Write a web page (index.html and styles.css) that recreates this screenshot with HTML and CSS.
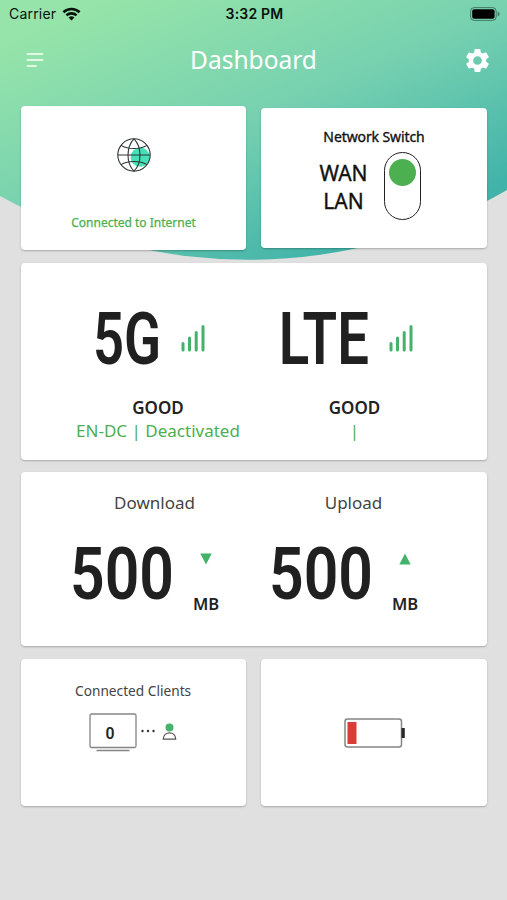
FILE: index.html
```html
<!DOCTYPE html>
<html lang="en">
<head>
  <meta charset="UTF-8">
  <title>Dashboard</title>
  <meta name="viewport" content="width=device-width, initial-scale=1.0">
  <link rel="stylesheet" href="styles.css">
</head>
<body>

<svg class="backdrop" width="507" height="262" viewBox="0 0 507 262">
  <defs>
    <linearGradient id="sky" gradientUnits="userSpaceOnUse" x1="16" y1="37" x2="144" y2="340">
      <stop offset="0" stop-color="#96e4a9"/>
      <stop offset="0.5" stop-color="#77d1b0"/>
      <stop offset="1" stop-color="#40b2a9"/>
    </linearGradient>
  </defs>
  <path d="M0 0H507V190A515 515 0 0 1 0 196Z" fill="url(#sky)"/>
</svg>

<div class="status">
  <div class="carrier">
    <span>Carrier</span>
    <svg width="19" height="14" viewBox="0 0 19 14">
      <g fill="none" stroke="#071209" stroke-width="2.6">
        <path d="M1.4 5.3A11.6 11.6 0 0 1 17.6 5.3"/>
        <path d="M4.4 8.4A7.4 7.4 0 0 1 14.6 8.4"/>
      </g>
      <path d="M6.5 10.6A4.3 4.3 0 0 1 12.5 10.6L9.5 13.6Z" fill="#071209"/>
    </svg>
  </div>
  <span class="time">3:32 PM</span>
  <svg class="phone-battery" width="30" height="14" viewBox="0 0 30 14">
    <rect x="0.6" y="0.6" width="25.6" height="12.8" rx="3.6" fill="none" stroke="#071209" stroke-opacity=".45"/>
    <rect x="2.2" y="2.2" width="22.4" height="9.6" rx="2" fill="#000"/>
    <path d="M27.6 4.6Q29.6 5.4 29.6 7T27.6 9.4Z" fill="#071209" fill-opacity=".45"/>
  </svg>
</div>

<div class="topbar">
  <svg width="18" height="16" viewBox="0 0 18 16">
    <path d="M1.500 2H16.500M1.500 8H16.500M1.500 14H10" fill="none" stroke="#e3f8e2" stroke-width="1.9" stroke-linecap="round"/>
  </svg>
  <h1>Dashboard</h1>
  <svg width="29" height="29" viewBox="0 0 24 24">
    <path fill="#fff" d="M19.14 12.94c.04-.3.06-.61.06-.94s-.02-.64-.07-.94l2.03-1.58c.18-.14.23-.41.12-.61l-1.92-3.32c-.12-.22-.37-.29-.59-.22l-2.39.96c-.5-.38-1.03-.7-1.62-.94l-.36-2.54c-.04-.24-.24-.41-.48-.41h-3.84c-.24 0-.43.17-.47.41l-.36 2.54c-.59.24-1.13.57-1.62.94l-2.39-.96c-.22-.08-.47 0-.59.22L2.74 8.87c-.12.21-.08.47.12.61l2.03 1.58c-.05.3-.09.63-.09.94s.02.64.07.94l-2.03 1.58c-.18.14-.23.41-.12.61l1.92 3.32c.12.22.37.29.59.22l2.39-.96c.5.38 1.03.7 1.62.94l.36 2.54c.05.24.24.41.48.41h3.84c.24 0 .44-.17.47-.41l.36-2.54c.59-.24 1.13-.56 1.62-.94l2.39.96c.22.08.47 0 .59-.22l1.92-3.32c.12-.22.07-.47-.12-.61l-2.01-1.58zM12 15.6c-1.98 0-3.6-1.62-3.6-3.6s1.62-3.6 3.6-3.6 3.6 1.62 3.6 3.6-1.62 3.6-3.6 3.6z"/>
  </svg>
</div>

<main class="cards">
  <div class="row">
    <section class="card internet">
      <svg width="34" height="34" viewBox="0 0 34 34">
        <circle cx="23.2" cy="19.2" r="9.6" fill="#45e2b7"/>
        <g fill="none" stroke="#303536" stroke-width="1.1">
          <circle cx="17" cy="17" r="16.2"/>
          <path d="M.8 17H33.2"/>
          <path d="M17 .8C9 9 9 25 17 33.2C25 25 25 9 17 .8"/>
          <path d="M4 7.400C11 11.600 23 11.600 30 7.400M4 26.600C11 22.400 23 22.400 30 26.600"/>
        </g>
      </svg>
      <p>Connected to Internet</p>
    </section>

    <section class="card network">
      <h2>Network Switch</h2>
      <div class="switch-row">
        <div class="switch-labels">
          <span>WAN</span>
          <span>LAN</span>
        </div>
        <div class="switch"><div class="knob"></div></div>
      </div>
    </section>
  </div>

  <section class="card signal">
    <div class="signal-col nr">
      <div class="signal-head">
        <svg class="big" width="68" height="58" viewBox="0 0 68 58">
          <text transform="scale(.74 1)" x="0" y="55" textLength="92" lengthAdjust="spacingAndGlyphs">5G</text>
        </svg>
        <svg class="bars" width="24" height="27" viewBox="0 0 24 27">
          <path d="M2 18.500V25M8.500 13V25M15.200 7.500V25M22 1.500V25"/>
        </svg>
      </div>
      <strong>GOOD</strong>
      <p>EN-DC | Deactivated</p>
    </div>
    <div class="signal-col lte">
      <div class="signal-head">
        <svg class="big" width="91" height="58" viewBox="0 0 91 58">
          <text transform="scale(.74 1)" x="1" y="55" textLength="122" lengthAdjust="spacingAndGlyphs">LTE</text>
        </svg>
        <svg class="bars" width="24" height="27" viewBox="0 0 24 27">
          <path d="M2 18.500V25M8.500 13V25M15.200 7.500V25M22 1.500V25"/>
        </svg>
      </div>
      <strong>GOOD</strong>
      <p>|</p>
    </div>
  </section>

  <section class="card traffic">
    <div class="traffic-col">
      <h2>Download</h2>
      <div class="traffic-value">
        <svg class="big" width="104" height="58" viewBox="0 0 104 58">
          <text transform="scale(.8 1)" x="0" y="55" textLength="130" lengthAdjust="spacingAndGlyphs">500</text>
        </svg>
        <div class="unit">
          <svg width="12" height="12" viewBox="0 0 12 12"><path d="M.3 .5H11.700L6 11.500Z"/></svg>
          <span>MB</span>
        </div>
      </div>
    </div>
    <div class="traffic-col">
      <h2>Upload</h2>
      <div class="traffic-value">
        <svg class="big" width="104" height="58" viewBox="0 0 104 58">
          <text transform="scale(.8 1)" x="0" y="55" textLength="130" lengthAdjust="spacingAndGlyphs">500</text>
        </svg>
        <div class="unit">
          <svg width="12" height="12" viewBox="0 0 12 12"><path d="M.3 11.500H11.700L6 .5Z"/></svg>
          <span>MB</span>
        </div>
      </div>
    </div>
  </section>

  <div class="row">
    <section class="card clients">
      <h2>Connected Clients</h2>
      <svg width="88" height="40" viewBox="0 0 88 40">
        <g fill="none" stroke="#858585" stroke-width="1.3">
          <rect x="1" y="1" width="46" height="33.500" rx="1.500"/>
          <path d="M7.500 37.500H40.500"/>
          <path d="M74.300 26.200C74.300 17.800 86.700 17.800 86.700 26.200Z" stroke="#555"/>
        </g>
        <g fill="#333">
          <circle cx="53.500" cy="18" r="1.200"/>
          <circle cx="59" cy="18" r="1.200"/>
          <circle cx="64.500" cy="18" r="1.200"/>
        </g>
        <circle cx="80.500" cy="14.600" r="4" fill="#44b36c"/>
        <text class="count" x="16.500" y="25.500" textLength="9" lengthAdjust="spacingAndGlyphs">0</text>
      </svg>
    </section>

    <section class="card battery">
      <svg width="61" height="30" viewBox="0 0 61 30">
        <rect x="1" y="1" width="56.500" height="28" rx="2.500" fill="none" stroke="#858585" stroke-width="1.500"/>
        <rect x="3.500" y="4" width="9" height="22" fill="#d93e36"/>
        <rect x="57.500" y="10" width="3.300" height="10" fill="#2a2a2a"/>
      </svg>
    </section>
  </div>
</main>

</body>
</html>
```
FILE: styles.css
```css
* { box-sizing: border-box; }
body { margin: 0; min-height: 900px; font-family: "Noto Sans", sans-serif; background: #e0e0e0; color: #222; }
h1, h2, p { margin: 0; font-weight: 400; }
svg { display: block; flex: none; }

/* green header shape behind everything */
.backdrop { position: absolute; top: 0; left: 0; z-index: -1; }

.status { display: grid; grid-template-columns: 1fr auto 1fr; align-items: center; height: 27px; padding: 0 7px 0 9px; font-family: Inter, sans-serif; font-size: 14px; color: #071209; }
.carrier { display: flex; align-items: center; gap: 6px; letter-spacing: .2px; }
.time { font-weight: 600; letter-spacing: .2px; }
.phone-battery { justify-self: end; }

.topbar { display: flex; align-items: center; justify-content: space-between; height: 66px; padding: 0 15px 0 26px; }
.topbar h1 { padding-bottom: 1px; font-size: 24.500px; letter-spacing: 0; color: #fff; }

.cards { display: flex; flex-direction: column; gap: 12.700px; padding: 13px 20px 0 21px; }
.row { display: grid; grid-template-columns: 225px 226px; justify-content: space-between; align-items: center; }
.card { background: #fff; border-radius: 4px; box-shadow: 0 1px 2px rgba(0, 0, 0, .25); }

.internet { display: flex; flex-direction: column; align-items: center; justify-content: space-between; height: 144px; padding: 32px 0 18px; }
.internet p { font-size: 12px; line-height: 18px; color: #4caf50; -webkit-text-stroke: .25px; }

.network { display: flex; flex-direction: column; align-items: center; height: 140px; padding-top: 19px; color: #111; -webkit-text-stroke: .35px; }
.network h2 { font-size: 14px; line-height: 20px; letter-spacing: -.1px; }
.switch-row { display: flex; align-items: flex-start; gap: 16px; margin: 5px 8px 0 0; }
.switch-labels { display: flex; flex-direction: column; align-items: center; padding-top: 7px; font-size: 21px; line-height: 28px; }
.switch { width: 37px; height: 68px; padding: 6px 3.500px; border: 1.5px solid #222; border-radius: 19px; }
.knob { width: 27px; height: 27px; margin: 0 auto; border-radius: 50%; background: #4caf50; }

.big { overflow: visible; }
.big text { font-family: Roboto, sans-serif; font-size: 73px; font-weight: 600; fill: #202020; }
.bars path { fill: none; stroke: #43b26b; stroke-width: 3; stroke-linecap: round; }

.signal { display: flex; height: 197px; padding: 46px 0 0 39px; }
.signal-col { display: flex; flex-direction: column; align-items: center; font-size: 17px; line-height: 23px; }
.signal-col strong { margin-top: 29px; font-weight: 600; }
.signal-col p { color: #4caf50; }
.signal-head { display: flex; align-items: center; gap: 20px; padding-right: 19px; }
.bars { margin-top: 2px; }
.nr { width: 196px; }
.lte { width: 197px; }

.traffic { display: flex; height: 174px; padding: 19px 0 0 34px; }
.traffic-col { width: 199px; }
.traffic-col h2 { font-size: 17px; line-height: 24px; text-align: center; color: #444; }
.traffic-value { display: flex; gap: 19px; padding: 29px 0 0 15px; }
.unit { display: flex; flex-direction: column; align-items: center; justify-content: space-between; height: 72px; padding-top: 9px; font-size: 16.500px; font-weight: 600; line-height: 24px; }
.unit path { fill: #43b26b; }

.clients, .battery { height: 147px; }
.clients { padding: 22px 0 0 54px; }
.clients h2 { font-size: 13.700px; line-height: 20px; color: #444; }
.clients svg { margin: 12px 0 0 14px; }
.count { font-family: Roboto, sans-serif; font-size: 17px; font-weight: 600; fill: #222; }
.battery { display: flex; align-items: center; justify-content: center; }
```
